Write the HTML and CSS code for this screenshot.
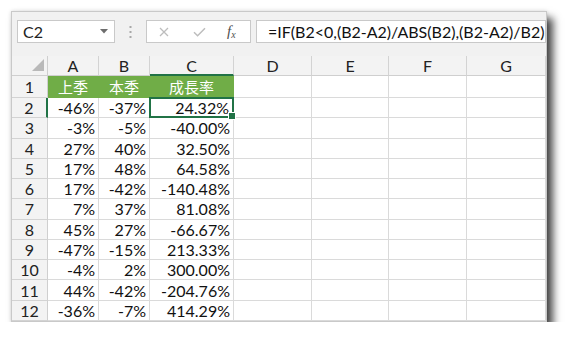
FILE: index.html
```html
<!DOCTYPE html>
<html>
<head>
<meta charset="utf-8">
<link rel="stylesheet" href="styles.css">
</head>
<body>
<div class="window">
  <div class="toolbar">
    <div class="namebox"><span>C2</span><svg class="arrow" width="8" height="5" viewBox="0 0 8 5"><path d="M0 0H8L4 4.5Z" fill="#6d6d6d"/></svg></div>
    <div class="grip"><svg width="3" height="12" viewBox="0 0 3 12"><rect x="0.5" y="0" width="2" height="2" fill="#a8a8a8"/><rect x="0.5" y="5" width="2" height="2" fill="#a8a8a8"/><rect x="0.5" y="10" width="2" height="2" fill="#a8a8a8"/></svg></div>
    <div class="fnbox">
      <svg class="i-x" width="10" height="10" viewBox="0 0 10 10"><path d="M1 1L9 9M9 1L1 9" stroke="#bdbdbd" stroke-width="1.3" fill="none"/></svg>
      <svg class="i-ok" width="13" height="10" viewBox="0 0 13 10"><path d="M1 5.2L4.6 8.8L12 1.2" stroke="#bdbdbd" stroke-width="1.5" fill="none"/></svg>
      <span class="fx">f<span class="fx-x">x</span></span>
    </div>
    <div class="formula">=IF(B2&lt;0,(B2-A2)/ABS(B2),(B2-A2)/B2)</div>
  </div>
  <div class="sheet">
    <div class="corner"><svg width="12" height="12" viewBox="0 0 12 12"><path d="M12 0V12H0Z" fill="#b9b9b9"/></svg></div>
    <div class="ch">A</div><div class="ch">B</div><div class="ch ch-sel">C</div><div class="ch">D</div><div class="ch">E</div><div class="ch">F</div><div class="ch">G</div>

    <div class="rh">1</div><div class="c g">上季</div><div class="c g">本季</div><div class="c g">成長率</div><div class="c"></div><div class="c"></div><div class="c"></div><div class="c"></div>
    <div class="rh rh-sel">2</div><div class="c">-46%</div><div class="c">-37%</div><div class="c sel">24.32%</div><div class="c"></div><div class="c"></div><div class="c"></div><div class="c"></div>
    <div class="rh">3</div><div class="c">-3%</div><div class="c">-5%</div><div class="c">-40.00%</div><div class="c"></div><div class="c"></div><div class="c"></div><div class="c"></div>
    <div class="rh">4</div><div class="c">27%</div><div class="c">40%</div><div class="c">32.50%</div><div class="c"></div><div class="c"></div><div class="c"></div><div class="c"></div>
    <div class="rh">5</div><div class="c">17%</div><div class="c">48%</div><div class="c">64.58%</div><div class="c"></div><div class="c"></div><div class="c"></div><div class="c"></div>
    <div class="rh">6</div><div class="c">17%</div><div class="c">-42%</div><div class="c">-140.48%</div><div class="c"></div><div class="c"></div><div class="c"></div><div class="c"></div>
    <div class="rh">7</div><div class="c">7%</div><div class="c">37%</div><div class="c">81.08%</div><div class="c"></div><div class="c"></div><div class="c"></div><div class="c"></div>
    <div class="rh">8</div><div class="c">45%</div><div class="c">27%</div><div class="c">-66.67%</div><div class="c"></div><div class="c"></div><div class="c"></div><div class="c"></div>
    <div class="rh">9</div><div class="c">-47%</div><div class="c">-15%</div><div class="c">213.33%</div><div class="c"></div><div class="c"></div><div class="c"></div><div class="c"></div>
    <div class="rh">10</div><div class="c">-4%</div><div class="c">2%</div><div class="c">300.00%</div><div class="c"></div><div class="c"></div><div class="c"></div><div class="c"></div>
    <div class="rh">11</div><div class="c">44%</div><div class="c">-42%</div><div class="c">-204.76%</div><div class="c"></div><div class="c"></div><div class="c"></div><div class="c"></div>
    <div class="rh">12</div><div class="c">-36%</div><div class="c">-7%</div><div class="c">414.29%</div><div class="c"></div><div class="c"></div><div class="c"></div><div class="c"></div>
  </div>
</div>
</body>
</html>
```

FILE: styles.css
```css
* { box-sizing: border-box; }

body {
  margin: 0;
  background: #ffffff;
  font-family: Lato, "Noto Sans CJK TC", sans-serif;
  color: #111;
}

.window {
  margin: 11px 0 0 11px;
  width: 536px;
  border: 1px solid #c9c9c9;
  background: #f1f1f1;
  box-shadow: 0 0 4px rgba(0, 0, 0, 0.14), 6px 7px 8px rgba(0, 0, 0, 0.72);
}

.toolbar {
  display: flex;
  align-items: center;
  height: 44px;
  padding: 8px 0 13px 5px;
}

.namebox {
  width: 98px;
  height: 23px;
  background: #fff;
  border: 1px solid #c9c9c9;
  display: flex;
  align-items: center;
  justify-content: space-between;
  padding: 0 6px 0 5px;
  font-size: 16px;
  color: #222;
}

.grip {
  width: 31px;
  display: flex;
  justify-content: center;
  align-items: center;
}

.fnbox {
  width: 105px;
  height: 23px;
  background: #fff;
  border: 1px solid #c9c9c9;
  display: flex;
  align-items: center;
  padding-left: 12px;
}

.i-ok { margin-left: 24px; }

.fx {
  margin-left: 21px;
  font-family: "Liberation Serif", serif;
  font-style: italic;
  font-size: 15px;
  color: #505050;
  line-height: 1;
}

.fx-x {
  font-size: 10px;
  position: relative;
  top: 2px;
}

.formula {
  margin-left: 5px;
  flex: 1;
  height: 23px;
  background: #fff;
  border: 1px solid #c9c9c9;
  padding-left: 11px;
  display: flex;
  align-items: center;
  font-size: 16px;
  color: #111;
  white-space: nowrap;
  overflow: hidden;
}

.sheet {
  display: grid;
  grid-template-columns: 36px 51px 51px 84px 78px 77px 78px 79px;
  grid-template-rows: 20px repeat(12, 1fr);
  height: 265px;
  background: #fff;
  font-size: 16px;
}

.corner {
  background: #f3f3f3;
  border-right: 1px solid #cfcfcf;
  border-bottom: 1px solid #cfcfcf;
  display: flex;
  align-items: flex-end;
  justify-content: flex-end;
  padding: 0 3px 4px 0;
}

.ch {
  background: #f3f3f3;
  border-right: 1px solid #d3d3d3;
  border-bottom: 1px solid #cfcfcf;
  display: flex;
  align-items: center;
  justify-content: center;
  color: #222;
}

.ch-sel { border-bottom: 2px solid #217346; }

.rh {
  background: #f3f3f3;
  border-right: 1px solid #cfcfcf;
  border-bottom: 1px solid #d3d3d3;
  display: flex;
  align-items: center;
  justify-content: center;
  color: #222;
}

.rh-sel { border-right: 2px solid #217346; }

.c {
  border-right: 1px solid #dadada;
  border-bottom: 1px solid #dadada;
  display: flex;
  align-items: center;
  justify-content: flex-end;
  padding-right: 3px;
  white-space: nowrap;
}

.g {
  background: #70ad47;
  border-color: #70ad47;
  color: #fff;
  justify-content: center;
  padding-right: 0;
  font-family: "Noto Sans CJK TC", sans-serif;
  font-size: 15px;
}

.sel { position: relative; padding-right: 4px; }

.sel::after {
  content: "";
  position: absolute;
  left: -1px;
  top: -1px;
  right: -1px;
  bottom: -1px;
  border: 2px solid #217346;
}

.sel::before {
  content: "";
  position: absolute;
  right: -3px;
  bottom: -3px;
  width: 6px;
  height: 6px;
  background: #217346;
  border: 1px solid #fff;
  z-index: 1;
}
```
